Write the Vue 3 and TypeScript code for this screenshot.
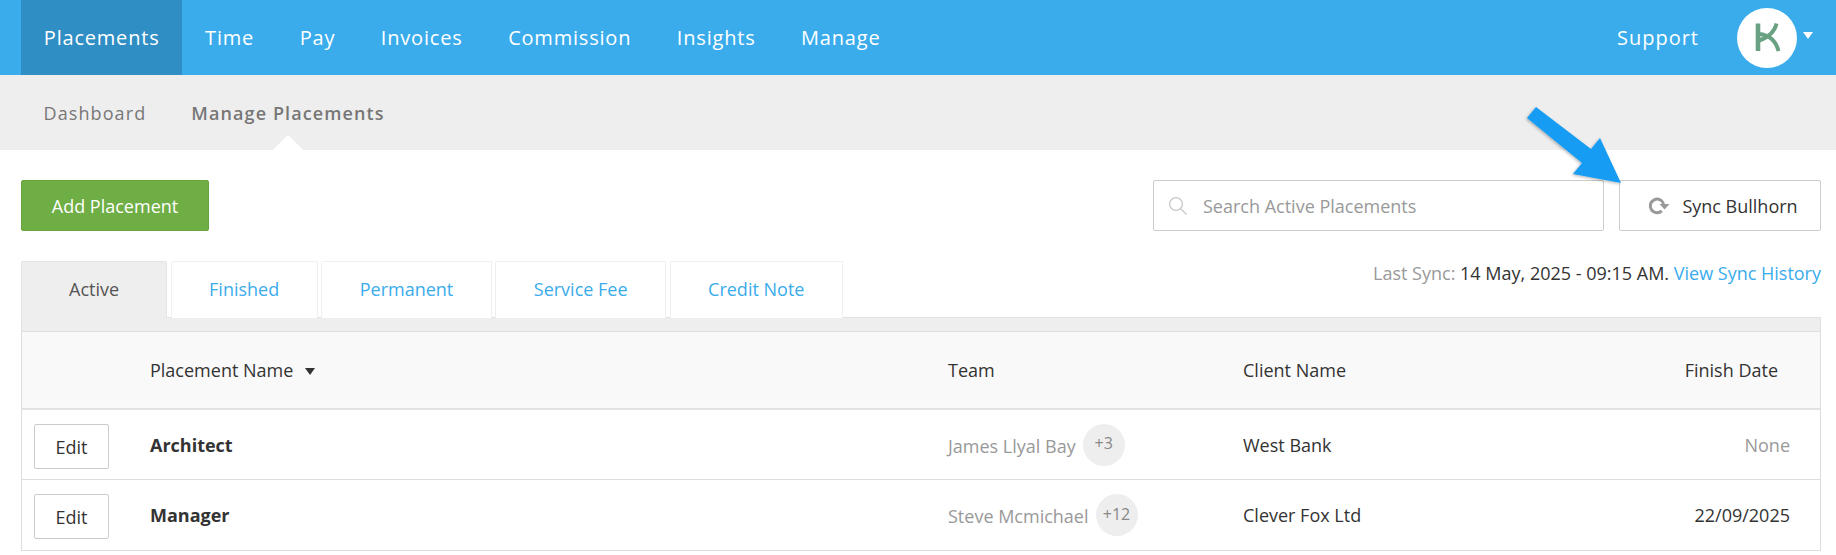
<script setup lang="ts">
interface Row { title: string; team: string; more: string; client: string; finish: string; none?: boolean }
const navItems: string[] = ['Time', 'Pay', 'Invoices', 'Commission', 'Insights', 'Manage']
const tabs: string[] = ['Finished', 'Permanent', 'Service Fee', 'Credit Note']
const rows: Row[] = [
  { title: 'Architect', team: 'James Llyal Bay', more: '+3', client: 'West Bank', finish: 'None', none: true },
  { title: 'Manager', team: 'Steve Mcmichael', more: '+12', client: 'Clever Fox Ltd', finish: '22/09/2025' },
]
</script>

<template>
  <div class="page">
    <header class="nav">
      <a class="nav-item active">Placements</a>
      <a v-for="n in navItems" :key="n" class="nav-item">{{ n }}</a>
      <a class="support">Support</a>
      <span class="avatar">
        <svg width="60" height="60" viewBox="0 0 60 60" fill="none" stroke="#69a283">
          <path d="M21 15.5V43" stroke-width="4.6" />
          <path d="M39.5 15.5C38 23 31 30 22 32.5" stroke-width="3.9" />
          <path d="M41.5 43C39 33 32 27 22 26" stroke-width="3.9" />
        </svg>
      </span>
      <span class="caret"></span>
    </header>
    <nav class="subnav">
      <a class="sub-item">Dashboard</a>
      <a class="sub-item current">Manage Placements</a>
    </nav>
    <main class="content">
      <div class="toolbar">
        <button class="add">Add Placement</button>
        <label class="search">
          <svg width="20" height="20" viewBox="0 0 20 20" fill="none" stroke="#c8c8c8" stroke-width="1.3">
            <circle cx="8" cy="8" r="6.4" />
            <path d="M12.8 12.8L18.5 18.5" />
          </svg>
          <span>Search Active Placements</span>
        </label>
        <button class="sync">
          <svg width="22" height="20" viewBox="0 0 22 20" fill="none">
            <path d="M15.6 8A6.8 6.8 0 1 0 13.8 14.8" stroke="#999" stroke-width="3" />
            <path d="M11.5 8H21.5L16.5 13.5Z" fill="#999" />
          </svg>
          <span>Sync Bullhorn</span>
        </button>
      </div>
      <div class="tab-row">
        <div class="tabs">
          <a class="tab on">Active</a>
          <a v-for="t in tabs" :key="t" class="tab">{{ t }}</a>
        </div>
        <div class="last-sync"><span class="muted">Last Sync:</span> 14 May, 2025 - 09:15 AM. <a>View Sync History</a></div>
      </div>
      <div class="band"></div>
      <table>
        <colgroup>
          <col class="c1" /><col class="c2" /><col class="c3" /><col /><col class="c5" />
        </colgroup>
        <thead>
          <tr>
            <th></th>
            <th>Placement Name <span class="sort"></span></th>
            <th>Team</th>
            <th>Client Name</th>
            <th class="right head-right">Finish Date</th>
          </tr>
        </thead>
        <tbody>
          <tr v-for="r in rows" :key="r.title">
            <td class="edit-cell"><button class="edit">Edit</button></td>
            <td class="name">{{ r.title }}</td>
            <td class="team"><span>{{ r.team }}</span><span class="more">{{ r.more }}</span></td>
            <td>{{ r.client }}</td>
            <td class="right" :class="{ none: r.none }">{{ r.finish }}</td>
          </tr>
        </tbody>
      </table>
    </main>
    <svg class="pointer" width="100" height="100" viewBox="0 0 100 100">
      <defs>
        <filter id="arrow-shadow" x="-20%" y="-20%" width="140%" height="140%">
          <feDropShadow dx="-1" dy="1" stdDeviation="1.5" flood-color="#000" flood-opacity="0.3" />
        </filter>
      </defs>
      <polygon points="21,7 76,49 85,38 106,83 58,74 67,63 12,18" fill="#199cf2" filter="url(#arrow-shadow)" />
    </svg>
  </div>
</template>

<style>
html, body { margin: 0; height: 555px; overflow: hidden; background: #fff; }
</style>

<style scoped>
.page { position: relative; width: 1836px; height: 555px; overflow: hidden; font-family: "Open Sans", sans-serif; font-size: 18px; color: #333; }
a { text-decoration: none; }
button { font-family: inherit; cursor: pointer; }
.nav { height: 75px; background: #3aacec; display: flex; align-items: center; padding-left: 21px; color: #fff; font-size: 20px; letter-spacing: 0.8px; }
.nav-item { height: 75px; line-height: 75px; padding: 0 22.8px; }
.nav-item.active { background: #2f8ec4; }
.support { margin-left: auto; margin-right: 38px; letter-spacing: 1px; }
.avatar { width: 60px; height: 60px; border-radius: 50%; background: #fff; display: block; }
.avatar svg { display: block; }
.caret { margin: -4px 23px 0 6px; border-left: 5px solid transparent; border-right: 5px solid transparent; border-top: 7px solid #fff; }
.subnav { height: 75px; background: #eee; display: flex; align-items: center; padding-left: 43.5px; gap: 45px; font-size: 18px; letter-spacing: 1.1px; color: #777; }
.sub-item { position: relative; line-height: 77px; height: 75px; }
.sub-item.current { font-weight: 600; }
.sub-item.current::after { content: ""; position: absolute; left: 50%; bottom: 0; margin-left: -15px; border-left: 15px solid transparent; border-right: 15px solid transparent; border-bottom: 15px solid #fff; }
.content { padding: 30px 15px 0 21px; }
.toolbar { display: flex; height: 51px; }
.add { width: 188px; height: 51px; background: #6fae45; border: 1px solid #67a53f; border-radius: 2px; color: #fff; font-size: 18px; padding: 0; }
.search { margin-left: auto; width: 451px; height: 51px; box-sizing: border-box; border: 1px solid #ccc; border-radius: 2px; display: flex; align-items: center; gap: 15px; padding-left: 14px; color: #999; }
.sync { margin-left: 15px; width: 202px; height: 51px; box-sizing: border-box; background: #fff; border: 1px solid #ccc; border-radius: 2px; display: flex; align-items: center; justify-content: center; gap: 12px; color: #333; font-size: 18px; padding: 0 0 0 6px; }
.tab-row { display: flex; justify-content: space-between; margin-top: 30px; height: 57px; }
.tabs { display: flex; gap: 3.5px; }
.tab { box-sizing: border-box; height: 57px; line-height: 55px; padding: 0 37.5px; border: 1px solid #f0f0f0; border-bottom: none; border-radius: 2px 2px 0 0; color: #3aacec; background: #fff; position: relative; z-index: 1; }
.tab.on { background: #eee; color: #555; padding: 0 47px; border-color: #e4e4e4; }
.last-sync { line-height: 24px; }
.last-sync .muted { color: #999; }
.last-sync a { color: #3aacec; }
.band { height: 15px; background: #eee; border: 1px solid #e0e0e0; box-sizing: border-box; margin-top: -1px; }
table { width: 1800px; border-collapse: separate; border-spacing: 0; table-layout: fixed; border-right: 1px solid #ddd; box-sizing: border-box; }
.c1 { width: 129px; } .c2 { width: 798px; } .c3 { width: 295px; } .c5 { width: 200px; }
th { box-sizing: border-box; height: 78px; background: #f9f9f9; font-weight: 400; text-align: left; padding: 0; border-bottom: 2px solid #e2e2e2; }
td { box-sizing: border-box; height: 70px; padding: 0; border-bottom: 1px solid #ddd; }
tr:last-child td { height: 71px; }
tr th:first-child, tr td:first-child { border-left: 1px solid #ddd; }
.sort { display: inline-block; margin-left: 7px; vertical-align: 2px; border-left: 5px solid transparent; border-right: 5px solid transparent; border-top: 7px solid #333; }
.edit-cell { padding: 14px 0 0 12px; vertical-align: top; }
.edit { display: block; width: 75px; height: 45px; background: #fff; border: 1px solid #ccc; border-radius: 2px; color: #333; font-size: 18px; padding: 0; }
.name { font-weight: 700; }
.team { color: #999; }
.team > span:first-child { display: inline-block; padding-top: 2px; vertical-align: middle; }
.more { display: inline-flex; width: 42px; height: 42px; margin-left: 7px; padding-bottom: 3px; box-sizing: border-box; border-radius: 50%; background: #eee; align-items: center; justify-content: center; font-size: 16px; color: #888; vertical-align: middle; }
.right { text-align: right; padding-right: 30px; }
.head-right { padding-right: 42px; }
.none { color: #999; }
.pointer { position: absolute; left: 1515px; top: 100px; overflow: visible; }
</style>
